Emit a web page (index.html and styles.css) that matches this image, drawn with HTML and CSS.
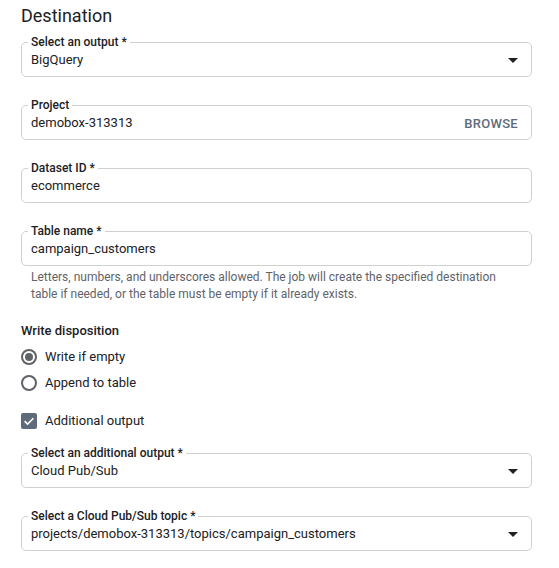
FILE: index.html
```html
<!DOCTYPE html>
<html>
<head>
<meta charset="utf-8">
<link rel="stylesheet" href="styles.css">
</head>
<body>
<div class="page">
  <h1 class="title">Destination</h1>

  <fieldset class="field">
    <legend class="label">Select an output *</legend>
    <div class="row"><span class="value">BigQuery</span><span class="arrow"></span></div>
  </fieldset>

  <fieldset class="field">
    <legend class="label">Project</legend>
    <div class="row"><span class="value">demobox-313313</span><span class="browse">BROWSE</span></div>
  </fieldset>

  <fieldset class="field">
    <legend class="label">Dataset ID *</legend>
    <div class="row"><span class="value">ecommerce</span></div>
  </fieldset>

  <fieldset class="field field-hint">
    <legend class="label">Table name *</legend>
    <div class="row"><span class="value">campaign_customers</span></div>
  </fieldset>
  <p class="hint">Letters, numbers, and underscores allowed. The job will create the specified destination table if needed, or the table must be empty if it already exists.</p>

  <div class="section-title">Write disposition</div>
  <div class="options">
    <div class="option"><span class="radio checked"></span><span>Write if empty</span></div>
    <div class="option"><span class="radio"></span><span>Append to table</span></div>
  </div>

  <div class="option check-row">
    <span class="checkbox"><svg width="16" height="16" viewBox="0 0 16 16"><path d="M3.6 8.2 L6.6 11.1 L12.4 5.3" fill="none" stroke="#fff" stroke-width="1.6"/></svg></span>
    <span>Additional output</span>
  </div>

  <fieldset class="field">
    <legend class="label">Select an additional output *</legend>
    <div class="row"><span class="value">Cloud Pub/Sub</span><span class="arrow"></span></div>
  </fieldset>

  <fieldset class="field">
    <legend class="label">Select a Cloud Pub/Sub topic *</legend>
    <div class="row"><span class="value">projects/demobox-313313/topics/campaign_customers</span><span class="arrow"></span></div>
  </fieldset>
</div>
</body>
</html>
```

FILE: styles.css
```css
* { box-sizing: border-box; }
html, body { margin: 0; padding: 0; background: #fff; }
body {
  font-family: Roboto, "Liberation Sans", Arial, sans-serif;
  color: #202124;
}
.page {
  padding: 5px 27px 0 21px;
  display: flex;
  flex-direction: column;
}
.title {
  margin: 0;
  font-size: 18px;
  font-weight: 400;
  line-height: 22px;
  color: #202124;
  margin-bottom: 8px;
}
.field {
  margin: 0 0 21px 0;
  padding: 0 9px 6px 9px;
  border: 1px solid #d0d0d0;
  border-radius: 5px;
  min-width: 0;
}
.field-hint { margin-bottom: 0; }
.label {
  padding: 0 3px;
  margin-left: -3px;
  font-size: 12px;
  line-height: 14px;
  font-weight: 500;
  color: #202124;
}
.row {
  display: flex;
  align-items: center;
  height: 20px;
  margin-top: 1px;
}
.value {
  flex: 1;
  font-size: 13px;
  line-height: 20px;
  color: #202124;
  white-space: nowrap;
}
.arrow {
  width: 0;
  height: 0;
  border-left: 5px solid transparent;
  border-right: 5px solid transparent;
  border-top: 5px solid #202124;
  margin-right: 4px;
}
.browse {
  font-size: 13px;
  font-weight: 500;
  color: #5f6b7a;
  letter-spacing: 0.3px;
  margin-right: 4px;
}
.hint {
  margin: 3px 0 0 10px;
  max-width: 472px;
  font-size: 12px;
  line-height: 17px;
  color: #5f6368;
}
.section-title {
  margin-top: 18px;
  font-size: 13px;
  font-weight: 500;
  line-height: 20px;
}
.options {
  display: flex;
  flex-direction: column;
  gap: 6px;
  margin-top: 6px;
}
.option {
  display: flex;
  align-items: center;
  gap: 8px;
  font-size: 13px;
  line-height: 20px;
}
.radio {
  width: 16px;
  height: 16px;
  border: 2px solid #5f6368;
  border-radius: 50%;
  display: flex;
  align-items: center;
  justify-content: center;
}
.radio.checked::after {
  content: "";
  width: 8px;
  height: 8px;
  border-radius: 50%;
  background: #5f6368;
}
.check-row { margin-top: 18px; margin-bottom: 15px; }
.checkbox {
  width: 16px;
  height: 16px;
  border-radius: 2px;
  background: #5f6b7a;
  display: flex;
}
```
